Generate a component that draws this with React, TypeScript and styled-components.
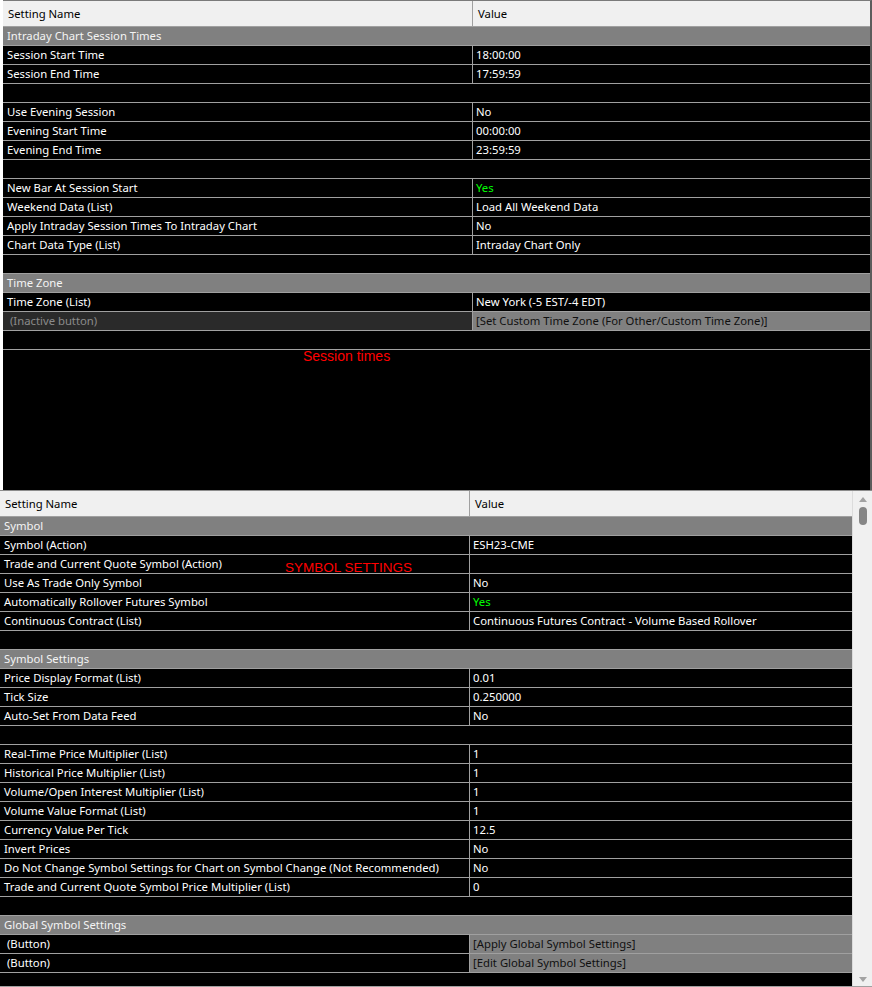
import React from "react";
import styled, { createGlobalStyle } from "styled-components";

const GlobalStyle = createGlobalStyle`
  html, body {
    margin: 0;
    padding: 0;
    background: #ffffff;
  }
  * {
    box-sizing: border-box;
  }
`;

type RowKind = "group" | "item" | "blank" | "inactive" | "button";

interface SettingRow {
  kind: RowKind;
  name?: string;
  value?: string;
  green?: boolean;
}

const sessionRows: SettingRow[] = [
  { kind: "group", name: "Intraday Chart Session Times" },
  { kind: "item", name: "Session Start Time", value: "18:00:00" },
  { kind: "item", name: "Session End Time", value: "17:59:59" },
  { kind: "blank" },
  { kind: "item", name: "Use Evening Session", value: "No" },
  { kind: "item", name: "Evening Start Time", value: "00:00:00" },
  { kind: "item", name: "Evening End Time", value: "23:59:59" },
  { kind: "blank" },
  { kind: "item", name: "New Bar At Session Start", value: "Yes", green: true },
  { kind: "item", name: "Weekend Data (List)", value: "Load All Weekend Data" },
  { kind: "item", name: "Apply Intraday Session Times To Intraday Chart", value: "No" },
  { kind: "item", name: "Chart Data Type (List)", value: "Intraday Chart Only" },
  { kind: "blank" },
  { kind: "group", name: "Time Zone" },
  { kind: "item", name: "Time Zone (List)", value: "New York (-5 EST/-4 EDT)" },
  {
    kind: "inactive",
    name: "\u00a0(Inactive button)",
    value: "[Set Custom Time Zone (For Other/Custom Time Zone)]",
  },
  { kind: "blank" },
];

const symbolRows: SettingRow[] = [
  { kind: "group", name: "Symbol" },
  { kind: "item", name: "Symbol (Action)", value: "ESH23-CME" },
  { kind: "item", name: "Trade and Current Quote Symbol (Action)", value: "" },
  { kind: "item", name: "Use As Trade Only Symbol", value: "No" },
  { kind: "item", name: "Automatically Rollover Futures Symbol", value: "Yes", green: true },
  { kind: "item", name: "Continuous Contract (List)", value: "Continuous Futures Contract - Volume Based Rollover" },
  { kind: "blank" },
  { kind: "group", name: "Symbol Settings" },
  { kind: "item", name: "Price Display Format (List)", value: "0.01" },
  { kind: "item", name: "Tick Size", value: "0.250000" },
  { kind: "item", name: "Auto-Set From Data Feed", value: "No" },
  { kind: "blank" },
  { kind: "item", name: "Real-Time Price Multiplier (List)", value: "1" },
  { kind: "item", name: "Historical Price Multiplier (List)", value: "1" },
  { kind: "item", name: "Volume/Open Interest Multiplier (List)", value: "1" },
  { kind: "item", name: "Volume Value Format (List)", value: "1" },
  { kind: "item", name: "Currency Value Per Tick", value: "12.5" },
  { kind: "item", name: "Invert Prices", value: "No" },
  { kind: "item", name: "Do Not Change Symbol Settings for Chart on Symbol Change (Not Recommended)", value: "No" },
  { kind: "item", name: "Trade and Current Quote Symbol Price Multiplier (List)", value: "0" },
  { kind: "blank" },
  { kind: "group", name: "Global Symbol Settings" },
  { kind: "button", name: "\u00a0(Button)", value: "[Apply Global Symbol Settings]" },
  { kind: "button", name: "\u00a0(Button)", value: "[Edit Global Symbol Settings]" },
  { kind: "blank" },
];

const Page = styled.div`
  width: 872px;
  height: 987px;
  display: flex;
  flex-direction: column;
  overflow: hidden;
  font-family: "Noto Sans", "Open Sans", sans-serif;
  font-size: 11.3px;
`;

const TopPanel = styled.div`
  position: relative;
  height: 490px;
  margin-left: 3px;
  background: #000000;
  border-top: 1px solid #7a7a7a;
  border-right: 2px solid #5c5c5c;
  overflow: hidden;
`;

const BottomPanel = styled.div`
  position: relative;
  height: 497px;
  display: flex;
  background: #000000;
  border-top: 1px solid #8c8c8c;
  border-bottom: 1px solid #a0a0a0;
  overflow: hidden;
`;

const GridArea = styled.div`
  flex: 1;
  display: flex;
  flex-direction: column;
  overflow: hidden;
`;

const Header = styled.div<{ $nameWidth: number }>`
  display: grid;
  grid-template-columns: ${(p) => p.$nameWidth}px 1fr;
  height: 26px;
  flex-shrink: 0;
  background: #f0f0f0;
  border-bottom: 1px solid #a0a0a0;
  color: #000000;
`;

const HeaderCell = styled.div<{ $divider?: boolean }>`
  line-height: 25px;
  padding-left: 5px;
  border-right: ${(p) => (p.$divider ? "1px solid #a0a0a0" : "none")};
  white-space: nowrap;
`;

const Row = styled.div<{ $nameWidth: number; $single?: boolean; $group?: boolean }>`
  display: grid;
  grid-template-columns: ${(p) => (p.$single ? "1fr" : `${p.$nameWidth}px 1fr`)};
  height: 19px;
  flex-shrink: 0;
  border-bottom: 1px solid #a0a0a0;
  background: ${(p) => (p.$group ? "#808080" : "#000000")};
`;

const NameCell = styled.div<{ $muted?: boolean; $group?: boolean; $single?: boolean }>`
  line-height: 18px;
  padding-left: 4px;
  white-space: nowrap;
  overflow: hidden;
  color: ${(p) => (p.$muted ? "#8a8a8a" : p.$group ? "#f4f4f4" : "#ffffff")};
  background: ${(p) => (p.$muted ? "#2a2a2a" : "transparent")};
  border-right: ${(p) => (p.$single ? "none" : "1px solid #a0a0a0")};
`;

const ValueCell = styled.div<{ $green?: boolean; $button?: boolean }>`
  line-height: 18px;
  padding-left: 3px;
  white-space: nowrap;
  overflow: hidden;
  color: ${(p) => (p.$button ? "#101010" : p.$green ? "#00ff00" : "#ffffff")};
  background: ${(p) => (p.$button ? "#808080" : "transparent")};
`;

const Note = styled.div<{ $left: number; $top: number; $size: number }>`
  position: absolute;
  left: ${(p) => p.$left}px;
  top: ${(p) => p.$top}px;
  font-family: "Liberation Sans", Arial, sans-serif;
  font-size: ${(p) => p.$size}px;
  line-height: 16px;
  color: #ff0000;
  white-space: nowrap;
  pointer-events: none;
`;

const ScrollTrack = styled.div`
  width: 20px;
  flex-shrink: 0;
  display: flex;
  flex-direction: column;
  align-items: center;
  background: #f0f0f0;
  border-left: 1px solid #dcdcdc;
  padding: 6px 0 4px;
`;

const Arrow = styled.div<{ $down?: boolean }>`
  width: 0;
  height: 0;
  border-left: 4px solid transparent;
  border-right: 4px solid transparent;
  ${(p) => (p.$down ? "border-top: 5px solid #a3a3a3;" : "border-bottom: 5px solid #a3a3a3;")}
`;

const Thumb = styled.div`
  width: 8px;
  height: 18px;
  margin-top: 5px;
  border-radius: 4px;
  background: #868686;
`;

const Spacer = styled.div`
  flex: 1;
`;

function SettingsRows({ rows, nameWidth }: { rows: SettingRow[]; nameWidth: number }) {
  return (
    <>
      {rows.map((r, i) => {
        if (r.kind === "group" || r.kind === "blank") {
          const group = r.kind === "group";
          return (
            <Row key={i} $nameWidth={nameWidth} $single $group={group}>
              <NameCell $single $group={group}>
                {r.name}
              </NameCell>
            </Row>
          );
        }
        return (
          <Row key={i} $nameWidth={nameWidth}>
            <NameCell $muted={r.kind === "inactive"}>{r.name}</NameCell>
            <ValueCell $green={r.green} $button={r.kind === "inactive" || r.kind === "button"}>
              {r.value}
            </ValueCell>
          </Row>
        );
      })}
    </>
  );
}

function GridHeader({ nameWidth }: { nameWidth: number }) {
  return (
    <Header $nameWidth={nameWidth}>
      <HeaderCell $divider>Setting Name</HeaderCell>
      <HeaderCell>Value</HeaderCell>
    </Header>
  );
}

export default function App() {
  return (
    <>
      <GlobalStyle />
      <Page>
        <TopPanel>
          <GridHeader nameWidth={470} />
          <SettingsRows rows={sessionRows} nameWidth={470} />
          <Note $left={300} $top={347} $size={14}>
            Session times
          </Note>
        </TopPanel>
        <BottomPanel>
          <GridArea>
            <GridHeader nameWidth={470} />
            <SettingsRows rows={symbolRows} nameWidth={470} />
          </GridArea>
          <ScrollTrack>
            <Arrow />
            <Thumb />
            <Spacer />
            <Arrow $down />
          </ScrollTrack>
          <Note $left={285} $top={69} $size={13.5}>
            SYMBOL SETTINGS
          </Note>
        </BottomPanel>
      </Page>
    </>
  );
}
